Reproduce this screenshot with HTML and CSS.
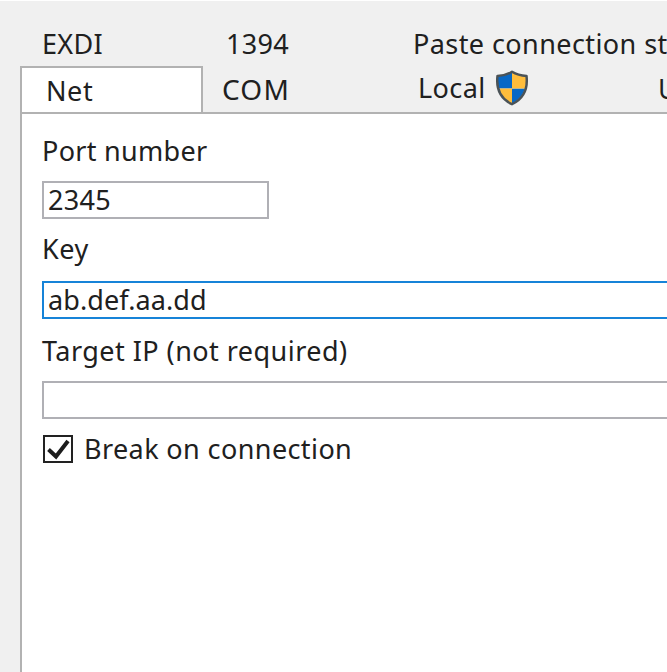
FILE: index.html
```html
<!DOCTYPE html>
<html lang="en">
<head>
<meta charset="utf-8">
<title>Kernel debugging</title>
<link rel="stylesheet" href="styles.css">
</head>
<body>
<div class="dialog">
  <div class="tabs tabs-back">
    <div class="tab exdi">EXDI</div>
    <div class="tab n1394">1394</div>
    <div class="tab paste">Paste connection st</div>
  </div>
  <div class="tabs tabs-front">
    <div class="tab active">Net</div>
    <div class="tab com-tab">COM</div>
    <div class="tab local-tab"><span class="local">Local</span>
      <svg class="shield" viewBox="0 0 34 36">
        <defs><clipPath id="s"><path d="M17 2.5Q23 6 31 6.5C32 19 28 28 17 33.500C6 28 2 19 3 6.500Q11 6 17 2.500Z"/></clipPath></defs>
        <g clip-path="url(#s)"><path fill="#0868c5" d="M0 0h17v18.500H0zM17 18.500h17V36H17z"/><path fill="#ffbd3b" d="M17 0h17v18.500H17zM0 18.500h17V36H0z"/></g>
        <path fill="none" stroke="#4b5357" stroke-width="2.500" stroke-linejoin="round" d="M17 1.800Q23 5.500 31.500 6C33 19 28 29 17 34.200C6 29 1 19 2.500 6Q11 5.500 17 1.800Z"/>
      </svg>
    </div>
    <div class="tab usb-tab">U</div>
  </div>
  <div class="panel">
    <div class="label port">Port number</div>
    <div class="field short">2345</div>
    <div class="label key-label">Key</div>
    <div class="field focused">ab.def.aa.dd</div>
    <div class="label target-label">Target IP (not required)</div>
    <div class="field target-field"></div>
    <div class="check">
      <svg class="box" viewBox="0 0 30 28"><rect x="1" y="1" width="28" height="26" fill="#fff" stroke="#222" stroke-width="2"/><path d="M5.500 14.500L13 21.500L25 6" fill="none" stroke="#1c1c1c" stroke-width="4"/></svg>
      <span class="break">Break on connection</span>
    </div>
  </div>
</div>
</body>
</html>
```
FILE: styles.css
```css
* { box-sizing: border-box; }
html, body { margin: 0; height: 672px; overflow: hidden; }
body {
  background: #f0f0f0;
  color: #202020;
  font: 27px/36px "Noto Sans", "Open Sans", sans-serif;
  white-space: nowrap;
}
.dialog {
  width: 667px;
  height: 672px;
  border-top: 1px solid #fff;
  padding-left: 20px;
  overflow: hidden;
  display: flex;
  flex-direction: column;
}
.tabs { display: flex; }
.tabs-back { height: 65px; padding: 25px 0 0 22px; }
.tabs-back .tab { flex: none; width: 185px; }
.tabs-back .exdi { width: 184px; letter-spacing: 0.3px; }
.tabs-back .n1394 { width: 187px; letter-spacing: 0.3px; }
.tabs-back .paste { letter-spacing: 0.42px; }
.tabs-front { height: 46px; }
.tab { flex: none; }
.active {
  width: 183px;
  height: 46px;
  padding: 5px 0 0 24px;
  background: #fff;
  border: 2px solid #b2b2b2;
  border-bottom: 0;
  letter-spacing: 0.6px;
}
.com-tab { width: 196px; padding: 5px 0 0 19px; font-size: 28px; letter-spacing: 1.2px; }
.local-tab { width: 259px; padding: 4px 0 0 19px; display: flex; letter-spacing: 0.4px; }
.usb-tab { padding-top: 5px; }
.shield { width: 34px; height: 36px; margin-left: 9px; }
.panel {
  flex: 1;
  background: #fff;
  border: solid #b2b2b2;
  border-width: 2px 0 0 2px;
  padding: 19px 0 0 20px;
}
.label { height: 36px; }
.port { letter-spacing: 0.3px; }
.field {
  width: 700px;
  height: 38px;
  margin-top: 12px;
  padding-left: 4px;
  border: 2px solid #b0b0b5;
  line-height: 34px;
}
.short { width: 227px; letter-spacing: 0.3px; }
.focused { margin-top: 14px; border-color: #1683d8; letter-spacing: 0.1px; }
.key-label { margin-top: 12px; letter-spacing: 0.6px; }
.target-label { margin-top: 14px; letter-spacing: 0.46px; }
.check { display: flex; margin-top: 12px; letter-spacing: 0.4px; }
.box { width: 30px; height: 28px; margin: 4px 11px 0 1px; }
```
